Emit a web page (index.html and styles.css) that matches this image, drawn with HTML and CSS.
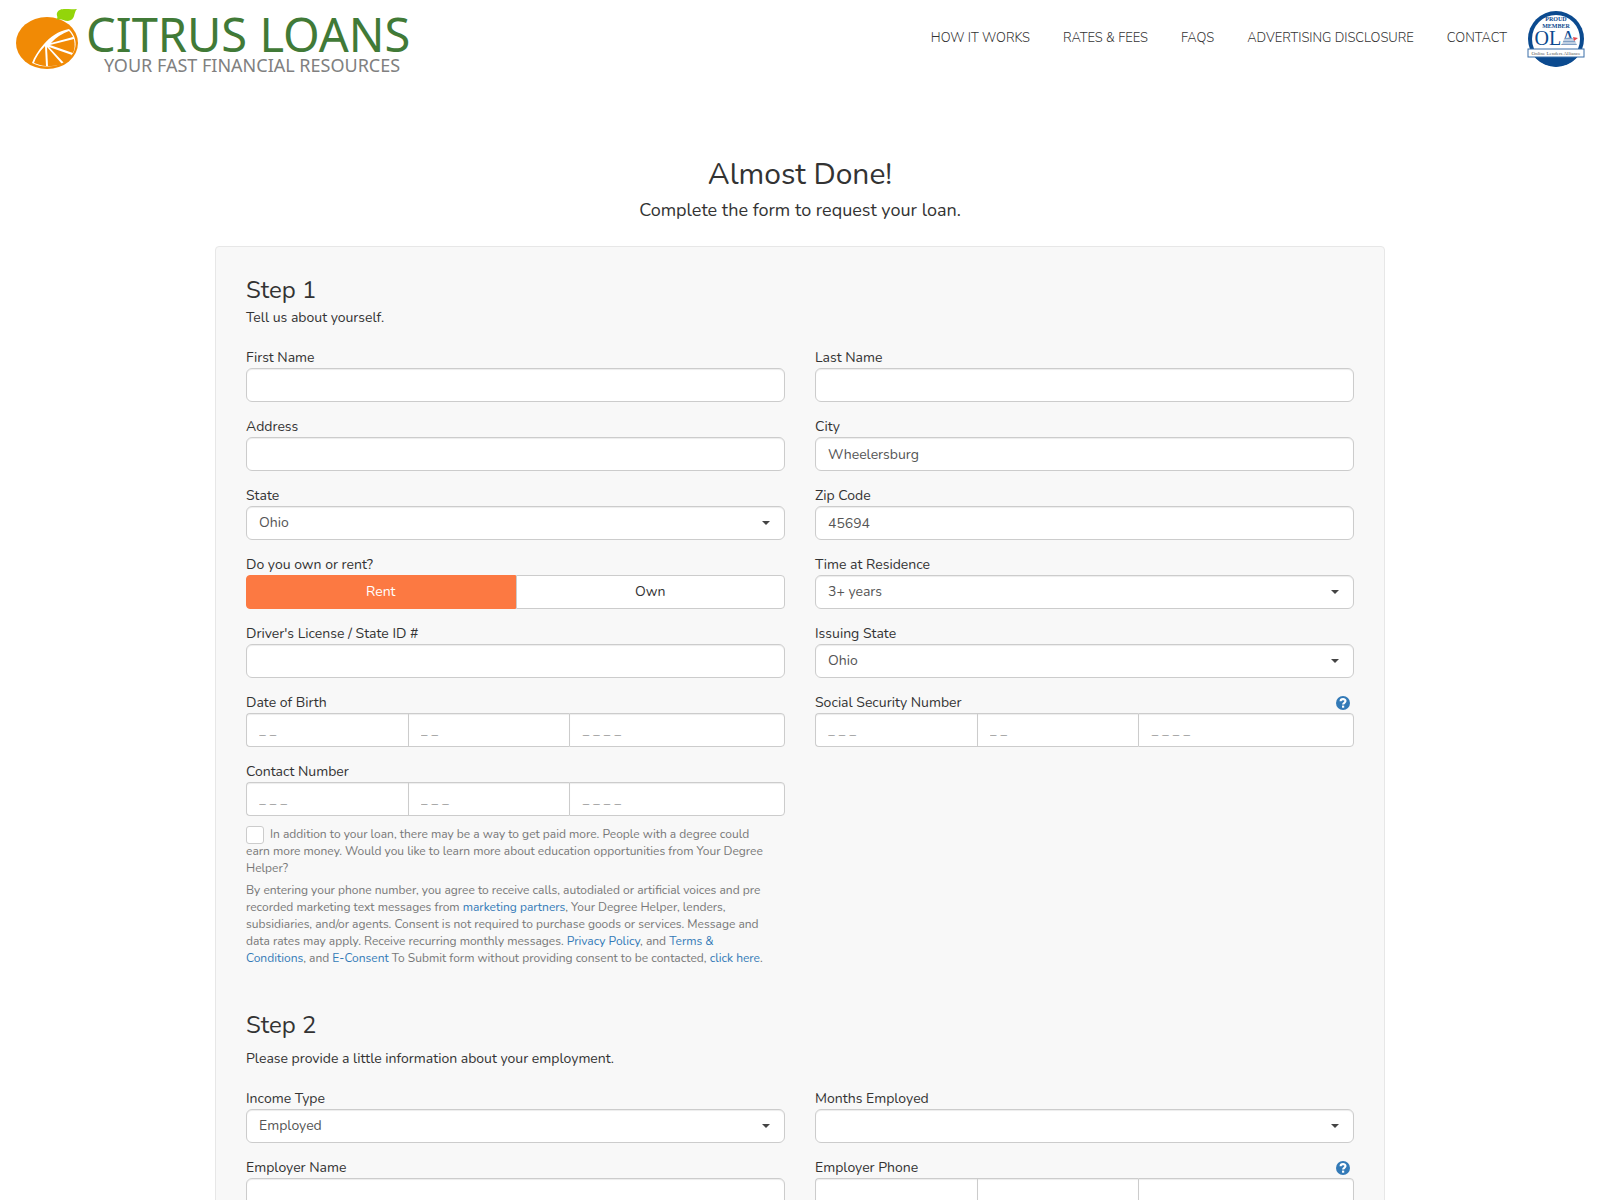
FILE: index.html
```html
<!DOCTYPE html>
<html lang="en">
  <head>
    <meta charset="UTF-8" />
    <meta name="viewport" content="width=device-width, initial-scale=1" />
    <title>Citrus Loans</title>
    <link rel="stylesheet" href="styles.css">
  </head>
  <body>
    <header class="site-header">
      <a class="logo" href="#">
        <svg class="logo-fruit" viewBox="0 0 64 62" aria-hidden="true">
          <ellipse cx="31" cy="35" rx="31" ry="26" fill="#f18a05" />
          <path d="M41 5C44 -1 50 2 61 1C57 5 60 12 52 13C47 13 45 10 40 12C43 9 40 8 41 5Z" fill="#93d50a" />
          <path d="M53 21C42 23 34 29 28 36C22 43 18 49 16 55C28 61 44 59 52 51C62 43 62 30 53 21Z" fill="#fff" />
          <g fill="#f18a05">
            <path d="M35 35Q42 27 53 23C55 25 56 27 57 29Z" />
            <path d="M34 37L58 31C59 37 59 41 57 45Z" />
            <path d="M33 39L56 47C54 51 52 53 48 55Z" />
            <path d="M31 39L46 56C41 58 36 58 32 58Z" />
            <path d="M29 38L30 58C26 58 22 56 18 55Q21 46 29 38Z" />
          </g>
        </svg>
        <span class="logo-text">
          <span class="logo-name">CITRUS LOANS</span>
          <span class="logo-tagline">YOUR FAST FINANCIAL RESOURCES</span>
        </span>
      </a>
      <nav class="main-nav">
        <a href="#">HOW IT WORKS</a>
        <a href="#">RATES &amp; FEES</a>
        <a href="#">FAQS</a>
        <a href="#">ADVERTISING DISCLOSURE</a>
        <a href="#">CONTACT</a>
        <a class="badge" href="#" aria-label="Online Lenders Alliance">
          <svg viewBox="0 0 58 58" width="58" height="58">
            <circle cx="29" cy="28" r="28" fill="#0b4a8f" />
            <circle cx="29" cy="28" r="24" fill="#fff" />
            <path d="M8 46H50A28 28 0 0 1 8 46Z" fill="#0b4a8f" />
            <text class="badge-small" x="29" y="10">PROUD</text>
            <text class="badge-small" x="29" y="17">MEMBER</text>
            <text class="badge-ola" x="28" y="34">OLA</text>
            <path d="M37 28Q42 25 47 28L50 34H35Z" fill="#7f9fc4" />
            <path d="M36 29H49M35 32H50" stroke="#fff" />
            <path d="M46 26L51 27L47 30Z" fill="#e5484d" />
            <rect x="1" y="38" width="56" height="8" fill="#fff" stroke="#3b6fa8" />
            <text class="badge-strip" x="29" y="44">Online Lenders Alliance</text>
          </svg>
        </a>
      </nav>
    </header>

    <main class="container">
      <h1>Almost Done!</h1>
      <p class="lead">Complete the form to request your loan.</p>

      <form class="panel">
        <section class="step">
          <h2>Step 1</h2>
          <p class="step-intro">Tell us about yourself.</p>
          <div class="fields">
            <div class="field">
              <label for="firstName">First Name</label>
              <input class="control" type="text" id="firstName" />
            </div>
            <div class="field">
              <label for="lastName">Last Name</label>
              <input class="control" type="text" id="lastName" />
            </div>
            <div class="field">
              <label for="address">Address</label>
              <input class="control" type="text" id="address" />
            </div>
            <div class="field">
              <label for="city">City</label>
              <input class="control" type="text" id="city" value="Wheelersburg" />
            </div>
            <div class="field">
              <label for="state">State</label>
              <div class="select">
                <select class="control" id="state"><option>Ohio</option></select>
              </div>
            </div>
            <div class="field">
              <label for="zip">Zip Code</label>
              <input class="control" type="text" id="zip" value="45694" />
            </div>
            <div class="field">
              <span class="label" id="residenceLabel">Do you own or rent?</span>
              <div class="toggle" role="group" aria-labelledby="residenceLabel">
                <button type="button" class="active" aria-pressed="true">Rent</button>
                <button type="button" aria-pressed="false">Own</button>
              </div>
            </div>
            <div class="field">
              <label for="residenceTime">Time at Residence</label>
              <div class="select">
                <select class="control" id="residenceTime"><option>3+ years</option></select>
              </div>
            </div>
            <div class="field">
              <label for="license">Driver's License / State ID #</label>
              <input class="control" type="text" id="license" />
            </div>
            <div class="field">
              <label for="issuingState">Issuing State</label>
              <div class="select">
                <select class="control" id="issuingState"><option>Ohio</option></select>
              </div>
            </div>
            <div class="field">
              <label for="dobMonth">Date of Birth</label>
              <div class="split">
                <input class="control" type="text" id="dobMonth" placeholder="_ _" />
                <input class="control" type="text" aria-label="Day" placeholder="_ _" />
                <input class="control" type="text" aria-label="Year" placeholder="_ _ _ _" />
              </div>
            </div>
            <div class="field">
              <div class="label-row">
                <label for="ssn">Social Security Number</label>
                <button type="button" class="help" aria-label="Help">
                  <svg viewBox="0 0 14 14" width="14" height="14">
                    <circle cx="7" cy="7" r="7" fill="#337ab7" />
                    <path d="M4.6 5.3C4.6 2.4 9.5 2.4 9.5 5.1C9.5 6.8 7.1 6.8 7.1 8.6" fill="none" stroke="#fff" stroke-width="2.1" />
                    <rect x="6" y="9.6" width="2.2" height="2.1" fill="#fff" />
                  </svg>
                </button>
              </div>
              <div class="split">
                <input class="control" type="text" id="ssn" placeholder="_ _ _" />
                <input class="control" type="text" aria-label="Middle digits" placeholder="_ _" />
                <input class="control" type="text" aria-label="Last digits" placeholder="_ _ _ _" />
              </div>
            </div>
            <div class="field">
              <label for="phone">Contact Number</label>
              <div class="split">
                <input class="control" type="text" id="phone" placeholder="_ _ _" />
                <input class="control" type="text" aria-label="Prefix" placeholder="_ _ _" />
                <input class="control" type="text" aria-label="Line number" placeholder="_ _ _ _" />
              </div>
              <div class="consent">
                <input type="checkbox" id="education" />
                <label for="education">In addition to your loan, there may be a way to get paid more. People with a degree could<br />
                earn more money. Would you like to learn more about education opportunities from Your Degree<br />
                Helper?</label>
              </div>
              <p class="terms">
                By entering your phone number, you agree to receive calls, autodialed or artificial voices and pre<br />
                recorded marketing text messages from <a href="#">marketing partners</a>, Your Degree Helper, lenders,<br />
                subsidiaries, and/or agents. Consent is not required to purchase goods or services. Message and<br />
                data rates may apply. Receive recurring monthly messages. <a href="#">Privacy Policy</a>, and <a href="#">Terms &amp;<br />
                Conditions</a>, and <a href="#">E-Consent</a> To Submit form without providing consent to be contacted, <a href="#">click here</a>.
              </p>
            </div>
          </div>
        </section>

        <section class="step">
          <h2>Step 2</h2>
          <p class="step-intro spaced">Please provide a little information about your employment.</p>
          <div class="fields">
            <div class="field">
              <label for="incomeType">Income Type</label>
              <div class="select">
                <select class="control" id="incomeType"><option>Employed</option></select>
              </div>
            </div>
            <div class="field">
              <label for="monthsEmployed">Months Employed</label>
              <div class="select">
                <select class="control" id="monthsEmployed"><option></option></select>
              </div>
            </div>
            <div class="field">
              <label for="employer">Employer Name</label>
              <input class="control" type="text" id="employer" />
            </div>
            <div class="field">
              <div class="label-row">
                <label for="employerPhone">Employer Phone</label>
                <button type="button" class="help" aria-label="Help">
                  <svg viewBox="0 0 14 14" width="14" height="14">
                    <circle cx="7" cy="7" r="7" fill="#337ab7" />
                    <path d="M4.6 5.3C4.6 2.4 9.5 2.4 9.5 5.1C9.5 6.8 7.1 6.8 7.1 8.6" fill="none" stroke="#fff" stroke-width="2.1" />
                    <rect x="6" y="9.6" width="2.2" height="2.1" fill="#fff" />
                  </svg>
                </button>
              </div>
              <div class="split">
                <input class="control" type="text" id="employerPhone" placeholder="_ _ _" />
                <input class="control" type="text" aria-label="Prefix" placeholder="_ _ _" />
                <input class="control" type="text" aria-label="Line number" placeholder="_ _ _ _" />
              </div>
            </div>
          </div>
        </section>
      </form>
    </main>
  </body>
</html>
```
FILE: styles.css
```css
:root {
  --text-color: #333;
  --muted: #777;
  --link: #337ab7;
  --border: #ccc;
  --accent: #fc7942;
}

* {
  box-sizing: border-box;
}

body {
  margin: 0;
  font-family: Nunito, Lato, sans-serif;
  font-size: 14px;
  line-height: 20px;
  color: var(--text-color);
  background: #fff;
}

a {
  color: var(--link);
  text-decoration: none;
}

/* Header */
.site-header {
  display: flex;
  justify-content: space-between;
  align-items: flex-start;
  padding: 8px 15px 8px 16px;
}

.logo {
  display: flex;
  gap: 6px;
}

.logo-fruit {
  width: 64px;
  height: 62px;
}

.logo-text {
  display: flex;
  flex-direction: column;
  font-family: "Noto Sans", "Open Sans", sans-serif;
  white-space: nowrap;
}

.logo-name {
  font-size: 47px;
  line-height: 52px;
  color: #417a37;
}

.logo-tagline {
  padding-left: 18px;
  font-size: 18px;
  line-height: 10px;
  color: #808080;
}

.main-nav {
  display: flex;
  align-items: flex-start;
  gap: 33px;
  padding-top: 3px;
}

.main-nav a {
  padding-top: 17px;
  font-size: 13px;
  font-weight: 300;
  color: #333;
}

.main-nav .badge {
  margin-left: -13px;
  padding: 0;
}

.badge svg {
  display: block;
}

.badge text {
  font-family: "Liberation Serif", serif;
  font-weight: 400;
  text-anchor: middle;
  fill: #0b4a8f;
}

.badge .badge-small {
  font-size: 6px;
  font-weight: bold;
}

.badge .badge-ola {
  font-size: 20px;
}

.badge .badge-strip {
  font-size: 5px;
  fill: #555;
}

/* Form */
.container {
  max-width: 1170px;
  margin: 0 auto;
  padding-top: 78px;
}

h1,
h2 {
  margin: 0;
  font-weight: 400;
}

h1 {
  font-size: 30px;
  line-height: 38px;
  text-align: center;
}

.lead {
  margin: 6px 0 26px;
  font-size: 18px;
  line-height: 20px;
  text-align: center;
}

.panel {
  padding: 30px;
  background: #f8f8f8;
  border: 1px solid #e7e7e7;
  border-radius: 4px;
}

.step {
  margin-bottom: 45px;
}

h2 {
  font-size: 24px;
  line-height: 26px;
}

.step-intro {
  margin: 5px 0 20px;
}

.step-intro.spaced {
  margin-top: 11px;
}

.fields {
  display: grid;
  grid-template-columns: 1fr 1fr;
  gap: 15px 30px;
}

.field label,
.label {
  display: block;
}

.label-row {
  display: flex;
  justify-content: space-between;
  align-items: center;
}

.control {
  display: block;
  width: 100%;
  height: 34px;
  padding: 6px 12px;
  font: inherit;
  color: #555;
  background: #fff;
  border: 1px solid var(--border);
  border-radius: 6px;
  box-shadow: inset 0 1px 1px rgba(0, 0, 0, 0.075);
  appearance: none;
}

.control::placeholder {
  color: #999;
}

.select {
  position: relative;
}

.select::after {
  content: "";
  position: absolute;
  top: 15px;
  right: 15px;
  border: 4px solid transparent;
  border-top-color: #444;
  border-bottom: 0;
  pointer-events: none;
}

.toggle {
  display: grid;
  grid-template-columns: 1fr 1fr;
}

.toggle button {
  height: 34px;
  padding: 0;
  font: inherit;
  color: #333;
  background: #fff;
  border: 1px solid var(--border);
  border-radius: 0 4px 4px 0;
  cursor: pointer;
}

.toggle .active {
  color: #fff;
  background: var(--accent);
  border-color: var(--accent);
  border-radius: 4px 0 0 4px;
}

.split {
  display: grid;
  grid-template-columns: 3fr 3fr 4fr;
}

.split .control {
  min-width: 0;
  border-radius: 0;
}

.split .control:not(:last-child) {
  border-right: 0;
}

.split .control:first-child {
  border-radius: 4px 0 0 4px;
}

.split .control:last-child {
  border-radius: 0 4px 4px 0;
}

.help {
  margin-right: 4px;
  padding: 0;
  background: none;
  border: 0;
  cursor: pointer;
}

.help svg {
  display: block;
}

.consent,
.terms {
  font-size: 12px;
  line-height: 17px;
  color: var(--muted);
}

.consent {
  margin-top: 10px;
}

.consent label {
  display: inline;
}

.consent input {
  float: left;
  width: 18px;
  height: 18px;
  margin: 0 6px -2px 0;
  background: #fff;
  border: 1px solid var(--border);
  border-radius: 3px;
  appearance: none;
}

.terms {
  margin: 5px 0 0;
}
```
